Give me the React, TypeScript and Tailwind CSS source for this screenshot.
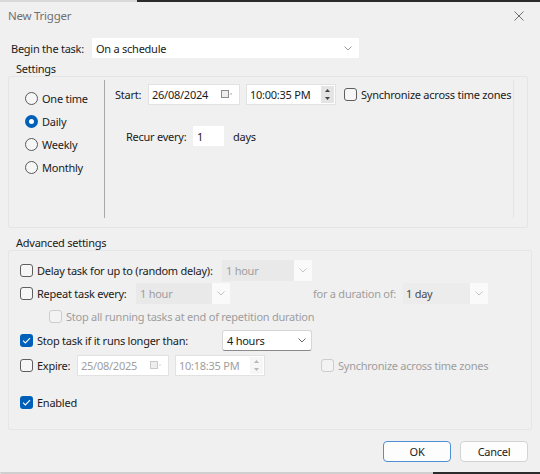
import React from "react";

const ink = "text-[#1b1b1b] whitespace-nowrap";
const dim = "text-[#9e9e9e] whitespace-nowrap";

function Chevron({ color = "#7a7a7a" }: { color?: string }) {
  return (
    <svg width="8" height="5" viewBox="0 0 8 5">
      <path d="M0.5 0.5 L4 4 L7.5 0.5" fill="none" stroke={color} strokeWidth="1" />
    </svg>
  );
}

function Box({ checked, disabled }: { checked?: boolean; disabled?: boolean }) {
  if (checked)
    return (
      <span className="w-[13px] h-[13px] rounded-[3px] bg-[#005fb8] flex items-center justify-center shrink-0">
        <svg width="9" height="7" viewBox="0 0 9 7">
          <path d="M1 3.6 L3.4 6 L8 1.2" fill="none" stroke="white" strokeWidth="1.1" />
        </svg>
      </span>
    );
  return (
    <span
      className={`w-[13px] h-[13px] rounded-[3px] border shrink-0 ${
        disabled ? "border-[#cdcdcd] bg-[#f3f3f3]" : "border-[#5e5e5e] bg-[#f6f6f6]"
      }`}
    />
  );
}

function Radio({ label, on }: { label: string; on?: boolean }) {
  return (
    <div className="h-[23px] flex items-center gap-[4px]">
      {on ? (
        <span className="w-[13px] h-[13px] rounded-full bg-[#005fb8] flex items-center justify-center">
          <span className="w-[5px] h-[5px] rounded-full bg-white" />
        </span>
      ) : (
        <span className="w-[13px] h-[13px] rounded-full border border-[#5a5a5a] bg-[#f6f6f6]" />
      )}
      <span className={ink}>{label}</span>
    </div>
  );
}

function Combo({ value, w, disabled }: { value: string; w: string; disabled?: boolean }) {
  return (
    <div
      className={`${w} h-[21px] flex items-stretch shrink-0 ${
        disabled ? "" : "bg-white border border-[#d6d6d6] border-b-[#8a8a8a] rounded-[3px]"
      }`}
    >
      <span
        className={`flex-1 flex items-center pl-[4px] ${disabled ? `bg-[#e9e9e9] ${dim}` : ink}`}
      >
        {value}
      </span>
      <span className={`w-[18px] flex items-center justify-center ${disabled ? "bg-[#fafafa]" : ""}`}>
        <Chevron color={disabled ? "#c4c4c4" : "#6a6a6a"} />
      </span>
    </div>
  );
}

function DateBox({ value, disabled }: { value: string; disabled?: boolean }) {
  const c = disabled ? "#c9c9c9" : "#8d8d8d";
  return (
    <div className="w-[92px] h-[21px] shrink-0 bg-white border border-[#e2e2e2] flex items-center pl-[3px] pr-[6px]">
      <span className={`flex-1 ${disabled ? dim : ink}`}>{value}</span>
      <svg width="12" height="9" viewBox="0 0 12 9">
        <rect x="0.5" y="0.5" width="7" height="7" fill="#eeeeee" stroke={c} />
        <path d="M9 3.5 L11 3.5 L10 5 Z" fill={c} />
      </svg>
    </div>
  );
}

function TimeBox({ value, disabled }: { value: string; disabled?: boolean }) {
  const c = disabled ? "#b8b8b8" : "#444";
  return (
    <div className="w-[90px] h-[21px] shrink-0 bg-white border border-[#e2e2e2] flex items-stretch pl-[3px]">
      <span className={`flex-1 flex items-center ${disabled ? dim : ink}`}>{value}</span>
      <span className={`w-[13px] my-[1px] mr-[1px] flex flex-col items-center justify-center gap-[5px] ${disabled ? "bg-[#f6f6f6]" : "bg-[#e4e4e4]"}`}>
        <svg width="5" height="3" viewBox="0 0 5 3">
          <path d="M0 3 L2.5 0 L5 3 Z" fill={c} />
        </svg>
        <svg width="5" height="3" viewBox="0 0 5 3">
          <path d="M0 0 L2.5 3 L5 0 Z" fill={c} />
        </svg>
      </span>
    </div>
  );
}

export default function App() {
  return (
    <div
      className="w-[540px] h-[474px] bg-[#f0f0f0] flex flex-col text-[11px] tracking-[-0.25px] leading-none overflow-hidden"
      style={{ fontFamily: "'Noto Sans', 'Open Sans', sans-serif" }}
    >
      {/* window edge */}
      <div className="h-[2px] flex">
        <div className="w-[137px] bg-[#d8d8d8]" />
        <div className="flex-1 bg-[#2b2b2b]" />
      </div>

      <div className="h-[28px] flex items-center justify-between pl-[8px] pr-[16px]">
        <span className="text-[#707070] text-[11.5px]">New Trigger</span>
        <svg width="10" height="10" viewBox="0 0 10 10">
          <path d="M0.5 0.5 L9.5 9.5 M9.5 0.5 L0.5 9.5" stroke="#6e6e6e" strokeWidth="1" />
        </svg>
      </div>

      <div className="mt-[8px] h-[20px] flex items-center pl-[11px]">
        <span className={`w-[81px] ${ink}`}>Begin the task:</span>
        <div className="w-[267px] h-[20px] bg-white flex items-center justify-between pl-[4px] pr-[7px]">
          <span className={ink}>On a schedule</span>
          <Chevron color="#9a9a9a" />
        </div>
      </div>

      <div className={`mt-[2px] h-[16px] flex items-center pl-[16px] ${ink}`}>Settings</div>

      <div className="ml-[8px] w-[520px] h-[152px] border border-[#e5e5e5] rounded-[2px] flex">
        <div className="w-[95px] pt-[10px] pl-[16px] flex flex-col">
          <Radio label="One time" />
          <Radio label="Daily" on />
          <Radio label="Weekly" />
          <Radio label="Monthly" />
        </div>
        <div className="mt-[3px] w-[410px] h-[138px] border-l border-[#a9a9a9] border-r border-r-[#e4e4e4] pt-[4px] pl-[10px] flex flex-col">
          <div className="h-[21px] flex items-center">
            <span className={`w-[33px] ${ink}`}>Start:</span>
            <DateBox value="26/08/2024" />
            <span className="w-[6px]" />
            <TimeBox value="10:00:35 PM" />
            <span className="w-[8px]" />
            <Box />
            <span className={`ml-[4px] ${ink}`}>Synchronize across time zones</span>
          </div>
          <div className="mt-[21px] h-[20px] flex items-center pl-[11px]">
            <span className={`w-[67px] ${ink}`}>Recur every:</span>
            <div className={`w-[31px] h-[20px] bg-white flex items-center pl-[4px] ${ink}`}>1</div>
            <span className={`ml-[9px] ${ink}`}>days</span>
          </div>
        </div>
      </div>

      <div className={`mt-[6px] h-[16px] flex items-center pl-[16px] ${ink}`}>Advanced settings</div>

      <div className="ml-[8px] w-[524px] h-[180px] border border-[#e6e6e6] rounded-[2px] pt-[8px] pl-[11px] flex flex-col">
        <div className="h-[23px] flex items-center">
          <Box />
          <span className={`ml-[4px] w-[185px] ${ink}`}>Delay task for up to (random delay):</span>
          <Combo value="1 hour" w="w-[90px]" disabled />
        </div>
        <div className="h-[23px] flex items-center">
          <Box />
          <span className={`ml-[4px] w-[99px] ${ink}`}>Repeat task every:</span>
          <Combo value="1 hour" w="w-[94px]" disabled />
          <span className={`ml-[83px] w-[90px] ${dim}`}>for a duration of:</span>
          <div className="w-[85px] h-[21px] flex items-stretch shrink-0">
            <span className="flex-1 flex items-center pl-[3px] bg-[#ececec] text-[#4a4a4a]">1 day</span>
            <span className="w-[18px] flex items-center justify-center bg-[#fafafa]">
              <Chevron color="#c4c4c4" />
            </span>
          </div>
        </div>
        <div className="h-[23px] flex items-center pl-[29px]">
          <Box disabled />
          <span className={`ml-[4px] ${dim}`}>Stop all running tasks at end of repetition duration</span>
        </div>
        <div className="h-[24px] flex items-center">
          <Box checked />
          <span className={`ml-[4px] w-[185px] ${ink}`}>Stop task if it runs longer than:</span>
          <Combo value="4 hours" w="w-[90px]" />
        </div>
        <div className="h-[26px] flex items-center">
          <Box />
          <span className={`ml-[4px] w-[40px] ${ink}`}>Expire:</span>
          <DateBox value="25/08/2025" disabled />
          <span className="w-[6px]" />
          <TimeBox value="10:18:35 PM" disabled />
          <span className="w-[56px]" />
          <Box disabled />
          <span className={`ml-[4px] ${dim}`}>Synchronize across time zones</span>
        </div>
        <div className="mt-[13px] h-[22px] flex items-center">
          <Box checked />
          <span className={`ml-[4px] ${ink}`}>Enabled</span>
        </div>
      </div>

      <div className="mt-[11px] flex justify-end gap-[9px] pr-[12px]">
        <button className={`w-[68px] h-[21px] rounded-[4px] bg-[#fdfdfd] border border-[#4f8fd6] ${ink}`}>OK</button>
        <button className={`w-[68px] h-[21px] rounded-[4px] bg-[#fdfdfd] border border-[#d3d3d3] ${ink}`}>Cancel</button>
      </div>

      <div className="mt-auto h-[2px] flex">
        <div className="w-[433px] bg-[#cfcfcf] rounded-bl-[6px]" />
        <div className="flex-1 bg-[#2b2b2b]" />
      </div>
    </div>
  );
}
